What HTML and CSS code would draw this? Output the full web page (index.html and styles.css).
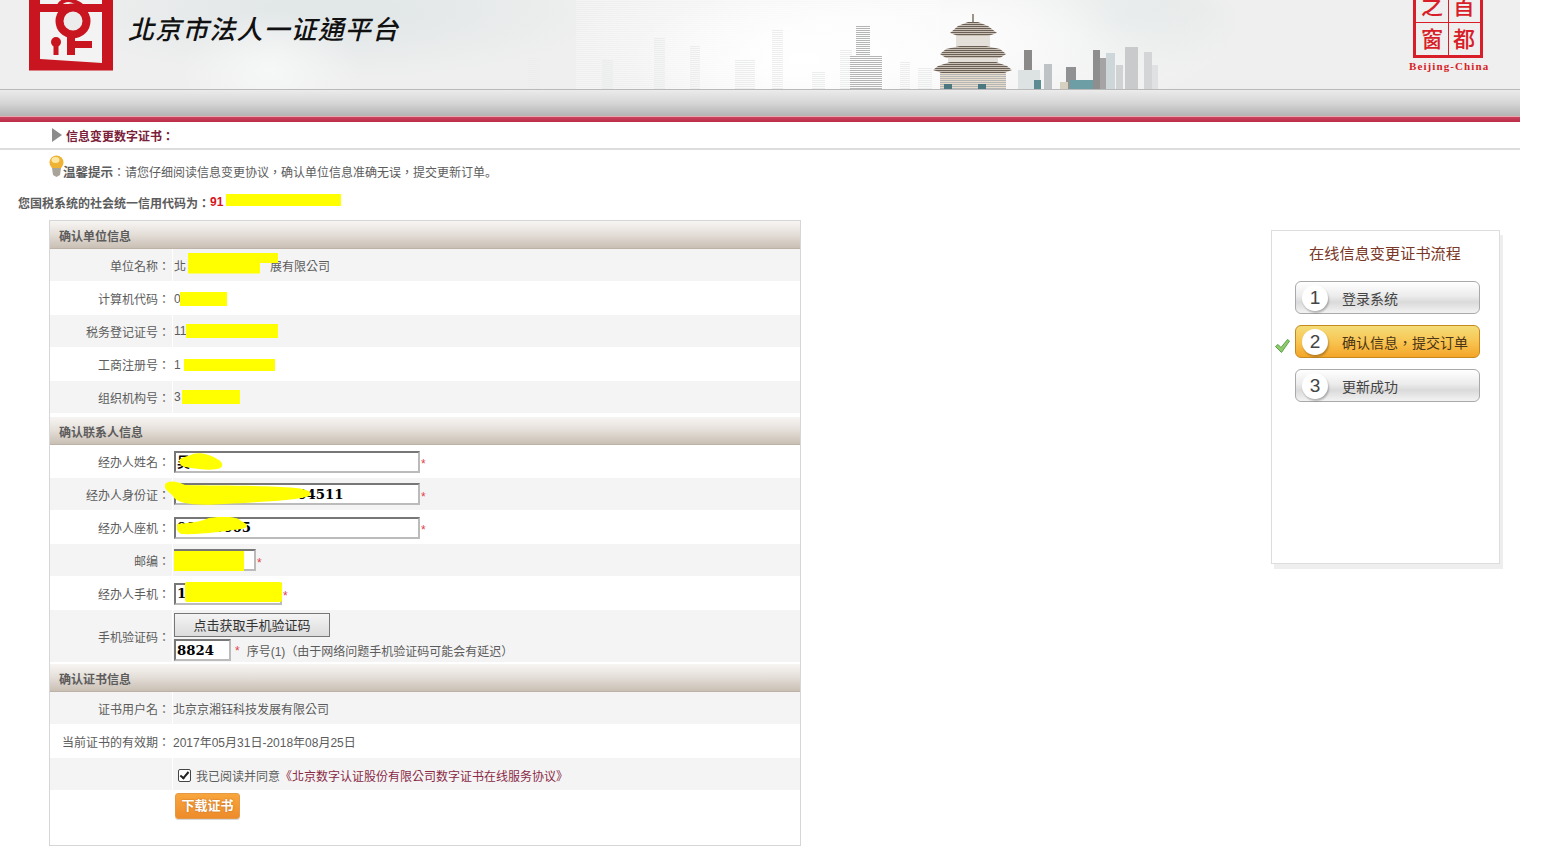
FILE: index.html
```html
<!DOCTYPE html>
<html lang="zh-TW">
<head>
  <meta charset="UTF-8">
  <meta name="viewport" content="width=device-width, initial-scale=1.0">
  <title>北京市法人一证通平台</title>
  <link rel="stylesheet" href="styles.css">
</head>
<body>
  <div class="page">
    <!-- 顶部横幅 -->
    <div class="banner">
      <svg class="skyline" viewBox="0 0 660 89" width="660" height="89">
        <defs>
          <pattern id="lines" width="4" height="2" patternUnits="userSpaceOnUse">
            <rect width="4" height="1" fill="#fff"/>
          </pattern>
          <pattern id="roof" width="4" height="2" patternUnits="userSpaceOnUse">
            <rect width="4" height="1" fill="#6a6058"/>
            <rect y="1" width="4" height="1" fill="#c9bfb2"/>
          </pattern>
          <pattern id="bars" width="4" height="2" patternUnits="userSpaceOnUse">
            <rect width="4" height="1" fill="#b4b6b6"/>
          </pattern>
          <pattern id="pale" width="4" height="2" patternUnits="userSpaceOnUse">
            <rect width="4" height="1" fill="#eceeee"/>
          </pattern>
        </defs>
        <rect x="66" y="0" width="364" height="89" fill="url(#lines)" opacity="0.35"/>
        <!-- 左侧浅色楼群 -->
        <g fill="url(#pale)">
          <rect x="18" y="57" width="12" height="32"/>
          <rect x="92" y="60" width="11" height="29"/>
          <rect x="144" y="37" width="11" height="52"/>
          <rect x="180" y="46" width="10" height="43"/>
          <rect x="225" y="60" width="20" height="29"/>
          <rect x="262" y="30" width="11" height="59"/>
          <rect x="302" y="72" width="13" height="17"/>
          <rect x="330" y="50" width="12" height="39"/>
          <rect x="390" y="62" width="10" height="27"/>
          <rect x="408" y="68" width="14" height="21"/>
        </g>
        <g fill="url(#bars)">
          <rect x="346" y="25" width="14" height="64"/>
          <rect x="360" y="55" width="12" height="34"/>
          <rect x="340" y="55" width="6" height="34"/>
        </g>
        <!-- 天坛 -->
        <rect x="462" y="14" width="2" height="10" fill="#9d9388"/>
        <rect x="430" y="72" width="66" height="17" fill="#e8dccd"/>
        <rect x="430" y="72" width="66" height="17" fill="url(#bars)"/>
        <rect x="446" y="34" width="34" height="14" fill="#e4dfd8"/>
        <rect x="438" y="56" width="50" height="8" fill="#e4dfd8"/>
        <path d="M458 22H468L478 26L487 33L478 36H448L440 33L448 26Z" fill="url(#roof)"/>
        <path d="M450 46H476L490 49L496 54L490 58H436L430 54L436 49Z" fill="url(#roof)"/>
        <path d="M440 62H486L497 66L502 70L494 73H432L423 70L428 66Z" fill="url(#roof)"/>
        <rect x="434" y="84" width="8" height="5" fill="#4d7780"/>
        <rect x="468" y="84" width="8" height="5" fill="#4d7780"/>
        <!-- 右侧楼群 -->
        <rect x="514" y="50" width="8" height="22" fill="#8c8a88"/>
        <rect x="508" y="70" width="22" height="19" fill="#dde2e3"/>
        <rect x="524" y="80" width="7" height="9" fill="#5c8b92"/>
        <rect x="534" y="64" width="8" height="25" fill="#bfc3c5"/>
        <rect x="556" y="67" width="10" height="22" fill="#8f9192"/>
        <rect x="550" y="82" width="8" height="7" fill="#d6d0c0"/>
        <rect x="560" y="80" width="30" height="9" fill="#6d9ea6"/>
        <rect x="583" y="50" width="7" height="39" fill="#8f8e8e"/>
        <rect x="590" y="58" width="6" height="31" fill="#a5a3a3"/>
        <rect x="596" y="53" width="9" height="36" fill="#cdd6d8"/>
        <rect x="606" y="65" width="7" height="24" fill="#d0d2d3"/>
        <rect x="615" y="47" width="13" height="42" fill="#c8cacc"/>
        <rect x="634" y="52" width="8" height="37" fill="#d4d5d6"/>
        <rect x="642" y="65" width="6" height="24" fill="#e0e1e2"/>
      </svg>

      <svg class="logo" viewBox="0 0 84 71" width="84" height="71">
        <rect x="11" y="0" width="62" height="61" fill="#f3f3f3"/>
        <path d="M0 0H11V59L73 63V0H84V70.500H0Z" fill="#c8151f"/>
        <rect x="0" y="4" width="84" height="8" fill="#c8151f"/>
        <path d="M30 10C28 2 38 -2 44 1C50 3 56 5 52 13" fill="none" stroke="#c8151f" stroke-width="4"/>
        <circle cx="44" cy="21" r="13.500" fill="#ececec" stroke="#c8151f" stroke-width="8"/>
        <path d="M38 33H46V41H63V48H46V55H38Z" fill="#c8151f"/>
        <circle cx="27" cy="42" r="5" fill="#c8151f"/>
        <rect x="24.500" y="43" width="5" height="12" fill="#c8151f"/>
      </svg>
      <h1 class="site-title">北京市法人一证通平台</h1>

      <div class="stamp">
        <div class="stamp-box">
          <span class="stamp-top">之</span>
          <span class="stamp-top">首</span>
          <span>窗</span>
          <span>都</span>
        </div>
        <div class="stamp-en">Beijing-China</div>
      </div>
    </div>
    <div class="nav-band"></div>
    <div class="nav-line"></div>

    <!-- 当前位置 -->
    <div class="crumb">
      <span class="crumb-arrow"></span>
      <span>信息变更数字证书：</span>
    </div>

    <div class="tip">
      <svg class="bulb" viewBox="0 0 15 22" width="15" height="22">
        <circle cx="7.500" cy="7.500" r="7" fill="#f0b232"/>
        <ellipse cx="6.500" cy="5" rx="4" ry="3" fill="#fbe7a6"/>
        <path d="M3 13H12L11 20L7.500 22L4 20Z" fill="#a9a49a"/>
      </svg>
      <b>温馨提示</b><span class="tip-text">：请您仔细阅读信息变更协议，确认单位信息准确无误，提交更新订单<span class="tip-end" lang="zh-CN">。</span></span>
    </div>

    <div class="credit">
      您国税系统的社会统一信用代码为：<em>91</em><span class="mask mask-credit"></span>
    </div>

    <div class="main">
      <div class="form-card">
        <!-- 确认单位信息 -->
        <div class="section-title section-first">确认单位信息</div>
        <div class="row odd">
          <div class="label">单位名称：</div>
          <div class="value">北<span class="mask mask-company"></span>展有限公司</div>
        </div>
        <div class="row">
          <div class="label">计算机代码：</div>
          <div class="value">0<span class="mask mask-code"></span></div>
        </div>
        <div class="row odd">
          <div class="label">税务登记证号：</div>
          <div class="value">11<span class="mask mask-tax"></span></div>
        </div>
        <div class="row">
          <div class="label">工商注册号：</div>
          <div class="value">1<span class="mask mask-reg"></span></div>
        </div>
        <div class="row odd">
          <div class="label">组织机构号：</div>
          <div class="value">3<span class="mask mask-org"></span></div>
        </div>

        <!-- 确认联系人信息 -->
        <div class="section-title">确认联系人信息</div>
        <div class="row">
          <div class="label">经办人姓名：</div>
          <div class="value field">
            <input class="text-input input-long" type="text" value="吴">
            <span class="star">*</span>
            <svg class="blob blob-name" viewBox="0 0 46 18" width="46" height="18"><path d="M3 6C8 3 12 3 16 1C24 -1 34 2 40 6C47 9 47 15 40 16C28 18 16 15 8 14C4 13 1 10 3 6Z"/></svg>
          </div>
        </div>
        <div class="row odd">
          <div class="label">经办人身份证：</div>
          <div class="value field">
            <input class="text-input input-long" type="text" value="000000000000004511">
            <span class="star">*</span>
            <svg class="blob blob-id" viewBox="0 0 146 24" width="146" height="24"><path d="M0 3C4 -1 12 0 20 4C50 5 100 4 130 7C142 8 148 11 144 15C130 20 90 21 60 23C30 25 12 23 8 15C4 11 -2 8 0 3Z"/></svg>
          </div>
        </div>
        <div class="row">
          <div class="label">经办人座机：</div>
          <div class="value field">
            <input class="text-input input-long" type="text" value="00000005">
            <span class="star">*</span>
            <svg class="blob blob-phone" viewBox="0 0 71 18" width="71" height="18"><path d="M0 7C10 6 24 5 32 1C44 -1 60 -1 64 4C72 7 72 11 64 12C48 14 24 18 4 17C0 15 -1 10 0 7Z"/></svg>
          </div>
        </div>
        <div class="row odd">
          <div class="label">邮编：</div>
          <div class="value field">
            <input class="text-input input-zip" type="text">
            <span class="star">*</span>
            <span class="blob blob-zip"></span>
          </div>
        </div>
        <div class="row">
          <div class="label">经办人手机：</div>
          <div class="value field">
            <input class="text-input input-mobile" type="text" value="1">
            <span class="star">*</span>
            <span class="blob blob-mobile"></span>
          </div>
        </div>
        <div class="row odd row-verify">
          <div class="label">手机验证码：</div>
          <div class="value value-stack">
            <button class="sms-btn" type="button">点击获取手机验证码</button>
            <div class="verify-line">
              <input class="text-input input-code" type="text" value="8824">
              <span class="star star-code">*</span>
              <span>序号(1)（由于网络问题手机验证码可能会有延迟）</span>
            </div>
          </div>
        </div>

        <!-- 确认证书信息 -->
        <div class="section-title section-last">确认证书信息</div>
        <div class="row odd">
          <div class="label">证书用户名：</div>
          <div class="value value-cert">北京京湘钰科技发展有限公司</div>
        </div>
        <div class="row">
          <div class="label">当前证书的有效期：</div>
          <div class="value value-cert">2017年05月31日-2018年08月25日</div>
        </div>
        <div class="row odd">
          <div class="label"></div>
          <div class="value agree">
            <input class="agree-check" type="checkbox" checked>
            我已阅读并同意<a class="agree-link" href="#">《北京数字认证股份有限公司数字证书在线服务协议》</a>
          </div>
        </div>
        <div class="actions">
          <button class="download-btn" type="button">下载证书</button>
        </div>
      </div>

      <!-- 流程 -->
      <div class="flow-card">
        <div class="flow-title">在线信息变更证书流程</div>
        <div class="flow-step">
          <span class="check-slot"></span>
          <div class="step"><span class="step-num">1</span>登录系统</div>
        </div>
        <div class="flow-step">
          <span class="check-slot">
            <svg viewBox="0 0 15 14" width="15" height="14"><path d="M0.500 7.500L3 5.500L6 8.500L12.500 0.500L14.500 2L6.500 13.500Z" fill="#8fcb6c" stroke="#5aa246" stroke-width="1"/></svg>
          </span>
          <div class="step step-active"><span class="step-num">2</span>确认信息，提交订单</div>
        </div>
        <div class="flow-step">
          <span class="check-slot"></span>
          <div class="step"><span class="step-num">3</span>更新成功</div>
        </div>
      </div>
    </div>
  </div>
</body>
</html>
```

FILE: styles.css
```css
body {
  margin: 0;
  background-color: #fff;
  color: #5c5c5c;
  font-family: "Liberation Sans", "Noto Sans CJK TC", sans-serif;
  font-size: 12px;
}

.page {
  width: 1520px;
}

/* 顶部横幅 */
.banner {
  position: relative;
  display: flex;
  height: 89px;
  overflow: hidden;
  background-color: #efefef;
  background-image:
    radial-gradient(ellipse 170px 70px at 800px 60px, #fff 0%, rgba(255,255,255,0) 100%),
    radial-gradient(ellipse 330px 90px at 900px 40px, #fbfbfb 30%, rgba(251,251,251,0) 100%),
    radial-gradient(ellipse 90px 60px at 270px 70px, #f6f7f7 0%, rgba(246,247,247,0) 100%),
    radial-gradient(ellipse 280px 70px at 330px 10px, #e2e7e8 20%, rgba(226,231,232,0) 100%),
    radial-gradient(ellipse 120px 60px at 1120px 20px, #dde3e3 0%, rgba(221,227,227,0) 100%);
}

.skyline {
  position: absolute;
  left: 510px;
  bottom: 0;
}

.logo {
  position: relative;
  flex: none;
  margin-left: 29px;
}

.site-title {
  position: relative;
  margin: 12px 0 0 15px;
  color: #111;
  font-size: 26px;
  font-style: italic;
  font-weight: 500;
  letter-spacing: 1.100px;
  line-height: 36px;
}

.stamp {
  position: relative;
  margin-left: auto;
  margin-right: 30px;
  width: 81px;
}

.stamp-box {
  display: grid;
  grid-template-columns: 1fr 1fr;
  grid-template-rows: 22px 33px;
  margin-left: 4px;
  width: 70px;
  box-sizing: border-box;
  border: 3px solid #d81e28;
  border-top: none;
  background-image: linear-gradient(#d81e28, #d81e28), linear-gradient(#d81e28, #d81e28);
  background-size: 1px 100%, 100% 1px;
  background-position: center, 0 22px;
  background-repeat: no-repeat;
  color: #d81e28;
  font-size: 22px;
  font-weight: 500;
  line-height: 36px;
  text-align: center;
}

.stamp-top {
  line-height: 16px;
  margin-top: -1px;
}

.stamp-en {
  margin-top: 2px;
  color: #d81e28;
  font-family: "Liberation Serif", serif;
  font-size: 11px;
  font-weight: bold;
  letter-spacing: 1.100px;
  line-height: 13px;
  white-space: nowrap;
}

.nav-band {
  height: 26px;
  border-top: 1px solid #b9b9b9;
  background: linear-gradient(#ebebeb, #d6d6d6 50%, #b4b4b4);
}

.nav-line {
  height: 5px;
  border-top: 1px solid #eba9ae;
  background: linear-gradient(#c8455f, #bd2a47);
}

/* 当前位置 */
.crumb {
  display: flex;
  align-items: center;
  height: 26px;
  padding-left: 52px;
  border-bottom: 2px solid #ddd;
  color: #7a2038;
  font-weight: bold;
}

.crumb-arrow {
  width: 0;
  height: 0;
  margin: -1px 4px 0 0;
  border-left: 10px solid #8c8c8c;
  border-top: 7px solid transparent;
  border-bottom: 7px solid transparent;
}

.tip {
  display: flex;
  align-items: flex-end;
  height: 32px;
  padding-left: 49px;
}

.bulb {
  flex: none;
  margin-bottom: 5px;
  margin-right: -1px;
}

.tip b {
  font-size: 12.500px;
  line-height: 18px;
}

.tip-text {
  line-height: 18px;
}

.tip-end {
  font-family: "Noto Sans CJK SC", sans-serif;
}

.credit {
  display: flex;
  align-items: center;
  height: 18px;
  margin-top: 11px;
  padding-left: 18px;
  font-weight: bold;
}

.credit em {
  color: #d8141e;
  font-style: normal;
}

/* 打码区域 */
.mask {
  flex: none;
  background-color: #ff0;
}

.mask-credit {
  width: 115px;
  height: 12px;
  margin: -4px 0 0 3px;
}

.mask-company {
  position: relative;
  width: 90px;
  height: 21px;
  margin: -4px -8px 0 2px;
  clip-path: polygon(0 0, 100% 0, 100% 50%, 80% 50%, 80% 100%, 0 100%);
}

.mask-code {
  width: 47px;
  height: 14px;
  margin-left: -1px;
}

.mask-tax {
  width: 92px;
  height: 14px;
}

.mask-reg {
  width: 91px;
  height: 12px;
  margin-left: 3px;
}

.mask-org {
  width: 58px;
  height: 14px;
  margin-left: 1px;
}

/* 表单 */
.main {
  display: flex;
  justify-content: space-between;
  align-items: flex-start;
  margin-top: 9px;
  padding: 0 20px 0 49px;
}

.form-card {
  width: 750px;
  border: 1px solid #d6d6d6;
}

.section-title {
  height: 27px;
  margin-top: 3px;
  padding-left: 9px;
  border-bottom: 1px solid #bdb2a6;
  background: linear-gradient(#f7f5f3, #e4ded8 50%, #c9bfb4);
  font-weight: bold;
  line-height: 32px;
}

.section-first {
  margin-top: 0;
}

.section-last {
  margin-top: 1px;
}

.row {
  display: flex;
  height: 33px;
  box-sizing: border-box;
}

.row.odd {
  border-bottom: 1px solid #fff;
  background-color: #f4f4f4;
}

.label {
  flex: none;
  display: flex;
  align-items: center;
  justify-content: flex-end;
  box-sizing: border-box;
  width: 123px;
  padding-right: 2px;
  border-right: 1px solid #fff;
  white-space: nowrap;
}

.value {
  display: flex;
  align-items: center;
  padding-left: 1px;
  white-space: nowrap;
}

.value-cert {
  padding-left: 0;
}

.field {
  position: relative;
}

.text-input {
  box-sizing: border-box;
  height: 22px;
  padding: 0 1px;
  border: 2px solid;
  border-color: #777 #bbb #bbb #777;
  border-radius: 0;
  outline: none;
  background-color: #fff;
  color: #000;
  font-family: "DejaVu Serif", "Noto Sans CJK TC", serif;
  font-size: 13.300px;
  font-weight: bold;
}

.input-long {
  width: 246px;
}

.input-zip {
  width: 82px;
}

.input-mobile {
  width: 108px;
}

.input-code {
  width: 57px;
}

.star {
  margin-left: 1px;
  color: #e0434b;
  line-height: 12px;
  margin-top: 5px;
}

.star-code {
  margin: 1px 7px 0 4px;
  line-height: 18px;
}

.blob {
  position: absolute;
  fill: #ff0;
}

.blob-name {
  left: 4px;
  top: 8px;
}

.blob-id {
  left: -8px;
  top: 3px;
}

.blob-phone {
  left: 4px;
  top: 6px;
}

.blob-zip {
  left: 1px;
  top: 7px;
  width: 70px;
  height: 20px;
  background-color: #ff0;
}

.blob-mobile {
  left: 12px;
  top: 5px;
  width: 97px;
  height: 20px;
  border-radius: 2px;
  background-color: #ff0;
}

.row-verify {
  height: 53px;
}

.value-stack {
  flex-direction: column;
  align-items: flex-start;
  gap: 2px;
  padding-top: 3px;
}

.sms-btn {
  box-sizing: border-box;
  width: 156px;
  height: 24px;
  padding: 0 0 2px;
  border: 1px solid #777;
  background: linear-gradient(#f4f4f4, #dcdcdc);
  color: #333;
  font-family: inherit;
  font-size: 13px;
}

.verify-line {
  display: flex;
  align-items: center;
}

.agree {
  padding: 2px 0 0 5px;
}

.agree-check {
  position: relative;
  flex: none;
  width: 13px;
  height: 13px;
  margin: 0 5px 0 0;
  appearance: none;
  border: 1px solid #444;
  border-radius: 2px;
  background-color: #fff;
}

.agree-check::after {
  content: "";
  position: absolute;
  left: 3px;
  top: 0;
  width: 3px;
  height: 7px;
  border: solid #222;
  border-width: 0 2px 2px 0;
  transform: rotate(40deg);
}

.agree-link {
  color: #8a2a46;
  text-decoration: none;
}

.actions {
  padding: 2px 0 26px 125px;
}

.download-btn {
  display: block;
  width: 65px;
  height: 26px;
  padding: 0 0 3px;
  border: 1px solid #e59a45;
  border-radius: 3px;
  background: linear-gradient(#f9a63e, #ed8b2b);
  box-shadow: 0 1px 0 #d8d8d8;
  color: #fff;
  font-family: inherit;
  font-size: 13px;
  font-weight: bold;
  text-shadow: 0 0 2px #b9661a;
}

/* 流程 */
.flow-card {
  box-sizing: border-box;
  width: 229px;
  height: 334px;
  margin-top: 10px;
  padding-right: 19px;
  border: 1px solid #ddd;
  box-shadow: 3px 5px 0 #eee;
}

.flow-title {
  margin: 12px 0 16px 18px;
  color: #7a3626;
  font-size: 15.200px;
  line-height: 22px;
  text-align: center;
}

.flow-step {
  display: flex;
  align-items: center;
  margin-bottom: 11px;
}

.check-slot {
  flex: none;
  width: 23px;
  height: 14px;
  padding-left: 3px;
  box-sizing: border-box;
  margin-top: 8px;
}

.step {
  display: flex;
  align-items: center;
  flex: 1;
  height: 33px;
  box-sizing: border-box;
  padding-left: 6px;
  border: 1px solid #a9a9a9;
  border-radius: 6px;
  background: linear-gradient(#fff, #ececec 45%, #dadada 65%, #f3f3f3);
  color: #444;
  font-size: 14px;
}

.step-active {
  border-color: #c48a20;
  background: linear-gradient(#f4dc78, #f8c552 50%, #f4a528);
  color: #4a3518;
}

.step-num {
  display: flex;
  align-items: center;
  justify-content: center;
  width: 26px;
  height: 26px;
  margin-right: 14px;
  border-radius: 50%;
  background-color: #fff;
  box-shadow: 1px 2px 2px rgba(0,0,0,0.25);
  color: #444;
  font-size: 19px;
}
```
